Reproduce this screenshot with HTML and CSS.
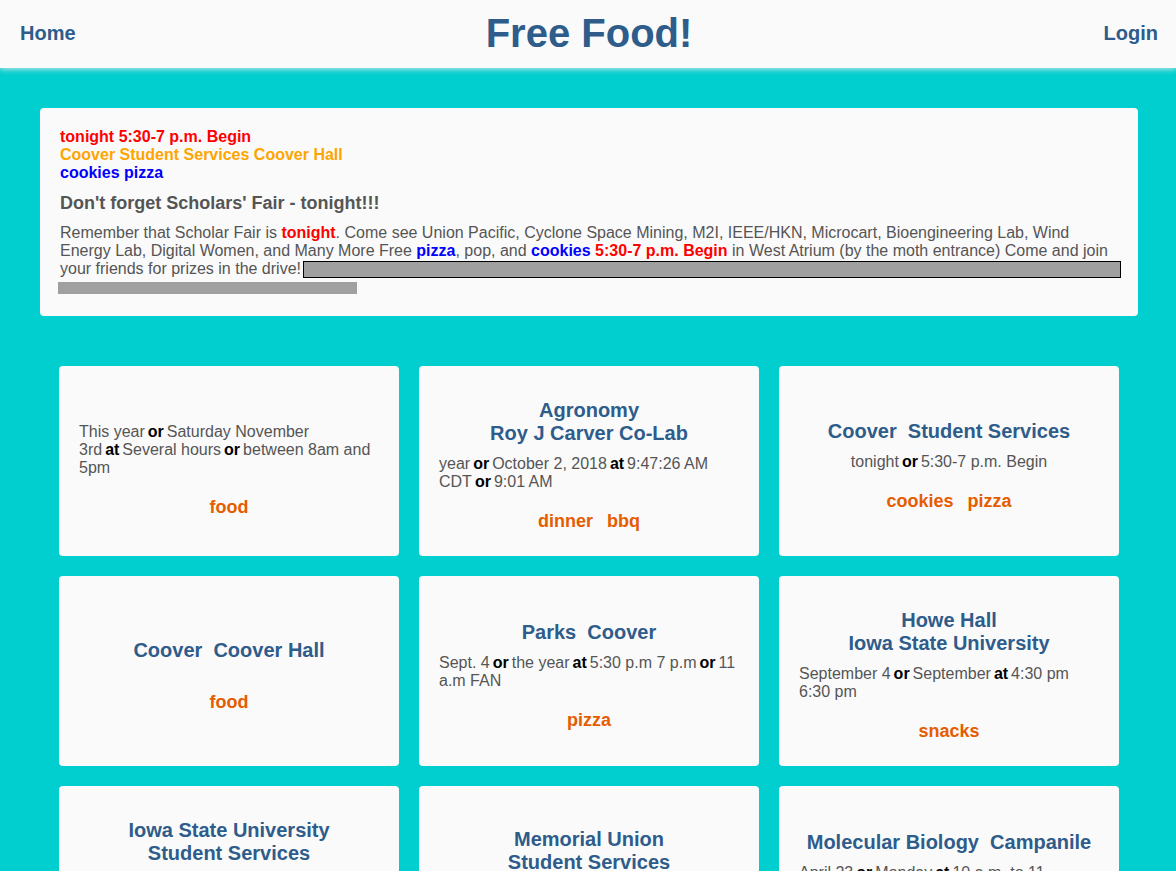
FILE: index.html
```html
<!DOCTYPE html>
<html>
<head>
<meta charset="utf-8">
<title>Free Food!</title>
<link rel="stylesheet" href="styles.css">
</head>
<body>
<header class="topbar">
  <a class="nav nav-left" href="#">Home</a>
  <h1 class="brand">Free Food!</h1>
  <a class="nav nav-right" href="#">Login</a>
</header>

<main class="main">
  <section class="feature">
    <div class="f-when">tonight 5:30-7 p.m. Begin</div>
    <div class="f-where">Coover Student Services Coover Hall</div>
    <div class="f-what">cookies pizza</div>
    <h2 class="f-title">Don't forget Scholars' Fair - tonight!!!</h2>
    <p class="f-body">Remember that Scholar Fair is <b class="hl-red">tonight</b>. Come see Union Pacific, Cyclone Space Mining, M2I, IEEE/HKN, Microcart, Bioengineering Lab, Wind Energy Lab, Digital Women, and Many More Free <b class="hl-blue">pizza</b>, pop, and <b class="hl-blue">cookies</b> <b class="hl-red">5:30-7 p.m. Begin</b> in West Atrium (by the moth entrance) Come and join your friends for prizes in the drive!<span class="bar1"></span></p>
    <div class="bar2"></div>
  </section>

  <section class="cards">
    <article class="card">
      <h3 class="c-title"></h3>
      <div class="c-text">This year<b>or</b>Saturday November<br>3rd<b>at</b>Several hours<b>or</b>between 8am and 5pm</div>
      <div class="c-tags"><span>food</span></div>
    </article>
    <article class="card">
      <h3 class="c-title">Agronomy<br>Roy J Carver Co-Lab</h3>
      <div class="c-text">year<b>or</b>October 2, 2018<b>at</b>9:47:26 AM CDT<b>or</b>9:01 AM</div>
      <div class="c-tags"><span>dinner</span> <span>bbq</span></div>
    </article>
    <article class="card">
      <h3 class="c-title">Coover&nbsp; Student Services</h3>
      <div class="c-text">tonight<b>or</b>5:30-7 p.m. Begin</div>
      <div class="c-tags"><span>cookies</span> <span>pizza</span></div>
    </article>

    <article class="card">
      <h3 class="c-title">Coover&nbsp; Coover Hall</h3>
      <div class="c-text"></div>
      <div class="c-tags"><span>food</span></div>
    </article>
    <article class="card">
      <h3 class="c-title">Parks&nbsp; Coover</h3>
      <div class="c-text">Sept. 4<b>or</b>the year<b>at</b>5:30 p.m 7 p.m<b>or</b>11 a.m FAN</div>
      <div class="c-tags"><span>pizza</span></div>
    </article>
    <article class="card">
      <h3 class="c-title">Howe Hall<br>Iowa State University</h3>
      <div class="c-text">September 4<b>or</b>September<b>at</b>4:30 pm 6:30 pm</div>
      <div class="c-tags"><span>snacks</span></div>
    </article>

    <article class="card">
      <h3 class="c-title">Iowa State University<br>Student Services</h3>
      <div class="c-text">September 6<b>or</b>Thursday<b>at</b>11 a.m. to 1 p.m. in the Great Hall</div>
      <div class="c-tags"><span>lunch</span></div>
    </article>
    <article class="card">
      <h3 class="c-title">Memorial Union<br>Student Services</h3>
      <div class="c-text">tonight<b>or</b>6 p.m.</div>
      <div class="c-tags"><span>pizza</span></div>
    </article>
    <article class="card">
      <h3 class="c-title">Molecular Biology&nbsp; Campanile</h3>
      <div class="c-text">April 23<b>or</b>Monday<b>at</b>10 a.m. to 11 Campanile Room</div>
      <div class="c-tags"><span>cookies</span></div>
    </article>
  </section>
</main>
</body>
</html>
```

FILE: styles.css
```css
* { box-sizing: border-box; }

html, body {
  margin: 0;
  padding: 0;
}

body {
  background: #00cecf;
  font-family: "Liberation Sans", Arial, Helvetica, sans-serif;
  color: #555555;
}

.topbar {
  height: 68px;
  background: #fafafa;
  display: grid;
  grid-template-columns: 1fr auto 1fr;
  align-items: center;
  padding: 0 18px 0 20px;
  box-shadow: 0 1px 6px rgba(225, 235, 235, 0.95);
  position: relative;
  z-index: 1;
}

.nav {
  font-size: 20px;
  font-weight: bold;
  color: #2e5c8b;
  text-decoration: none;
  line-height: 24px;
  padding-bottom: 2px;
}

.nav-right { justify-self: end; }

.brand {
  margin: 0;
  font-size: 40px;
  line-height: 46px;
  font-weight: bold;
  color: #2e5c8b;
  padding-bottom: 2px;
}

.main {
  padding: 40px 38px 40px 40px;
}

.feature {
  background: #fafafa;
  border-radius: 4px;
  padding: 20px 20px 22px 20px;
  font-size: 16px;
  line-height: 18px;
}

.f-when, .f-where, .f-what { font-weight: bold; }
.f-when { color: #ff0000; }
.f-where { color: #ffa500; }
.f-what { color: #0000ff; }

.f-title {
  margin: 10px 0;
  font-size: 18px;
  line-height: 22px;
  font-weight: bold;
  color: #555555;
}

.f-body {
  margin: 0;
  color: #555555;
}

.hl-red { color: #ff0000; }
.hl-blue { color: #0000ff; }

.bar1 {
  display: inline-block;
  width: 818px;
  height: 17px;
  margin-left: 2px;
  margin-right: -20px;
  background: #a0a0a0;
  border: 1px solid #000;
  vertical-align: -4px;
}

.bar2 {
  width: 299px;
  height: 12px;
  margin: 4px 0 0 -2px;
  background: #a0a0a0;
}

.cards {
  margin: 50px 17px 0 19px;
  display: grid;
  grid-template-columns: repeat(3, 340px);
  grid-auto-rows: 190px;
  gap: 20px;
}

.card {
  background: #fafafa;
  border-radius: 4px;
  padding: 0 20px;
  display: flex;
  flex-direction: column;
  justify-content: center;
  align-items: center;
  overflow: hidden;
}

.c-title {
  margin: 8px 0 10px;
  font-size: 20px;
  line-height: 23px;
  font-weight: bold;
  color: #2e5c8b;
  text-align: center;
}

.c-text {
  font-size: 16px;
  line-height: 18px;
  color: #555555;
  text-align: left;
  max-width: 300px;
}

.c-text b {
  color: #000;
  margin: 0 3px;
}

.c-tags {
  margin-top: 20px;
  font-size: 18px;
  line-height: 20px;
  font-weight: bold;
  color: #e65c00;
  text-align: center;
}

.c-tags span { margin: 0 4.5px; }
```
